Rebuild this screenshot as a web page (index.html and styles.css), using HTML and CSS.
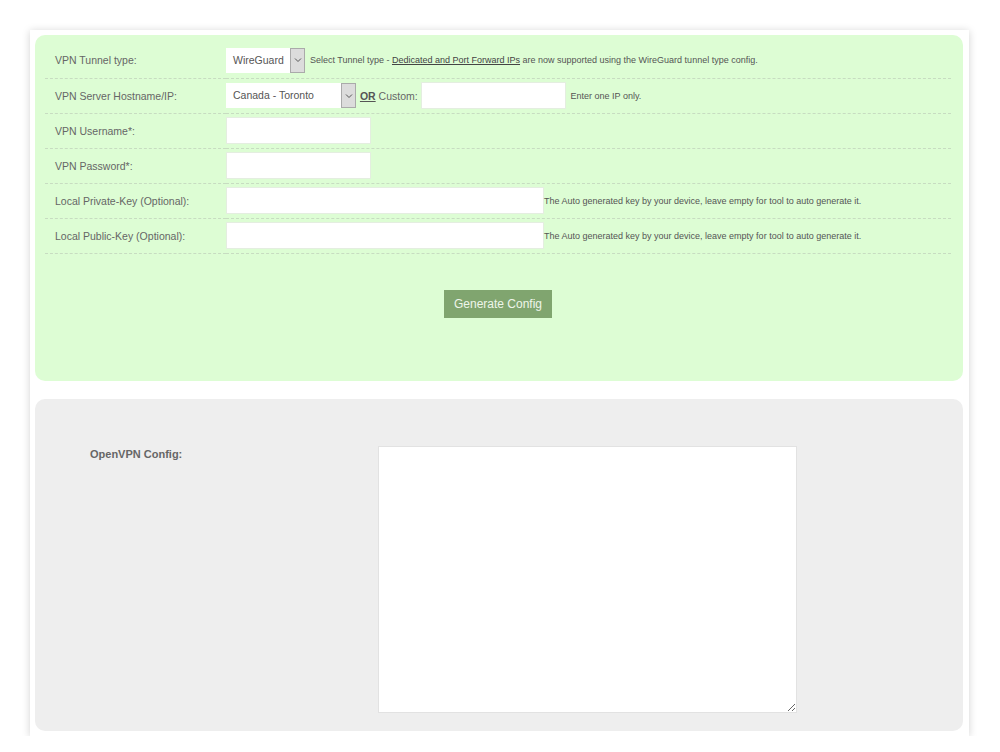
FILE: index.html
```html
<!DOCTYPE html>
<html lang="en">
<head>
    <meta charset="UTF-8">
    <title>WireGuard Config Generator</title>
    <link rel="stylesheet" href="styles.css">
</head>
<body>
    <div class="wrapper">
        <div class="form-box">
            <table class="form-table">
                <tr>
                    <td class="label">VPN Tunnel type:</td>
                    <td>
                        <span class="select-box tunnel">
                            <span class="select-value">WireGuard</span>
                            <span class="select-arrow"><svg width="8" height="6" viewBox="0 0 8 6"><path d="M1 1.5 L4 4.5 L7 1.5" fill="none" stroke="#555" stroke-width="1"/></svg></span>
                        </span>
                        <span class="hint">Select Tunnel type - <a href="#">Dedicated and Port Forward IPs</a> are now supported using the WireGuard tunnel type config.</span>
                    </td>
                </tr>
                <tr>
                    <td class="label">VPN Server Hostname/IP:</td>
                    <td>
                        <span class="select-box server">
                            <span class="select-value">Canada - Toronto</span>
                            <span class="select-arrow"><svg width="8" height="6" viewBox="0 0 8 6"><path d="M1 1.5 L4 4.5 L7 1.5" fill="none" stroke="#555" stroke-width="1"/></svg></span>
                        </span>
                        <span class="or">OR</span> <span class="custom">Custom:</span>
                        <input type="text" class="field custom-field">
                        <span class="hint">Enter one IP only.</span>
                    </td>
                </tr>
                <tr>
                    <td class="label">VPN Username*:</td>
                    <td><input type="text" class="field short"></td>
                </tr>
                <tr>
                    <td class="label">VPN Password*:</td>
                    <td><input type="password" class="field short"></td>
                </tr>
                <tr>
                    <td class="label">Local Private-Key (Optional):</td>
                    <td><input type="text" class="field long"><span class="hint key-hint">The Auto generated key by your device, leave empty for tool to auto generate it.</span></td>
                </tr>
                <tr>
                    <td class="label">Local Public-Key (Optional):</td>
                    <td><input type="text" class="field long"><span class="hint key-hint">The Auto generated key by your device, leave empty for tool to auto generate it.</span></td>
                </tr>
            </table>
            <div class="actions">
                <button type="button">Generate Config</button>
            </div>
        </div>

        <div class="output-box">
            <div class="output-label">OpenVPN Config:</div>
            <textarea class="output"></textarea>
        </div>
    </div>
</body>
</html>
```

FILE: styles.css
```css
* {
    box-sizing: border-box;
}

body {
    margin: 0;
    background: #fff;
    font-family: 'Liberation Sans', Arial, sans-serif;
    font-size: 10.5px;
    color: #666;
}

.wrapper {
    width: 939px;
    margin: 30px 0 0 30px;
    padding: 5px 6px 5px 5px;
    background: #fff;
    box-shadow: 0 1px 8px rgba(0, 0, 0, 0.18);
}

.form-box {
    background: #ddfdd4;
    border-radius: 10px;
    padding: 8px 12px 63px 10px;
}

.form-table {
    width: 100%;
    border-collapse: collapse;
}

.form-table td {
    padding: 3px 0;
    border-bottom: 1px dashed #c7dcc1;
    vertical-align: middle;
    white-space: nowrap;
    height: 35px;
}

.form-table td.label {
    width: 181px;
    padding-left: 10px;
    color: #666;
}

.select-box {
    display: inline-flex;
    vertical-align: middle;
    height: 25px;
    background: #fff;
}

.select-value {
    padding: 0 7px;
    line-height: 25px;
    font-size: 10.5px;
    color: #555;
}

.tunnel .select-value {
    width: 64px;
}

.server .select-value {
    width: 115px;
}

.select-arrow {
    width: 15px;
    height: 25px;
    background: #dcdcdc;
    border: 1px solid #aaa;
    display: flex;
    align-items: center;
    justify-content: center;
}

.hint {
    font-size: 9px;
    color: #555;
    margin-left: 2px;
    vertical-align: middle;
}

.hint a {
    color: #444;
}

.or {
    font-weight: bold;
    text-decoration: underline;
    color: #555;
    margin-left: 1px;
    vertical-align: middle;
}

.custom {
    vertical-align: middle;
}

.field {
    vertical-align: middle;
    height: 27px;
    border: 1px solid #e4eee0;
    background: #fff;
    padding: 2px 5px;
    font-family: inherit;
    font-size: 11px;
    outline: none;
}

.custom-field {
    width: 145px;
}

.short {
    width: 145px;
}

.long {
    width: 318px;
}

.key-hint {
    margin-left: 0;
}

.actions {
    text-align: center;
    margin-top: 36px;
}

.actions button {
    background: #80a56f;
    color: #eef5ea;
    border: none;
    font-family: inherit;
    font-size: 12px;
    width: 108px;
    height: 28px;
    cursor: pointer;
}

.output-box {
    margin-top: 18px;
    background: #eee;
    border-radius: 10px;
    padding: 47px 0 18px 55px;
    display: flex;
    align-items: flex-start;
}

.output-label {
    width: 288px;
    font-size: 11px;
    font-weight: bold;
    padding-top: 2px;
}

.output {
    width: 419px;
    height: 267px;
    border: 1px solid #e2e2e2;
    background: #fff;
    margin: 0;
}
```
